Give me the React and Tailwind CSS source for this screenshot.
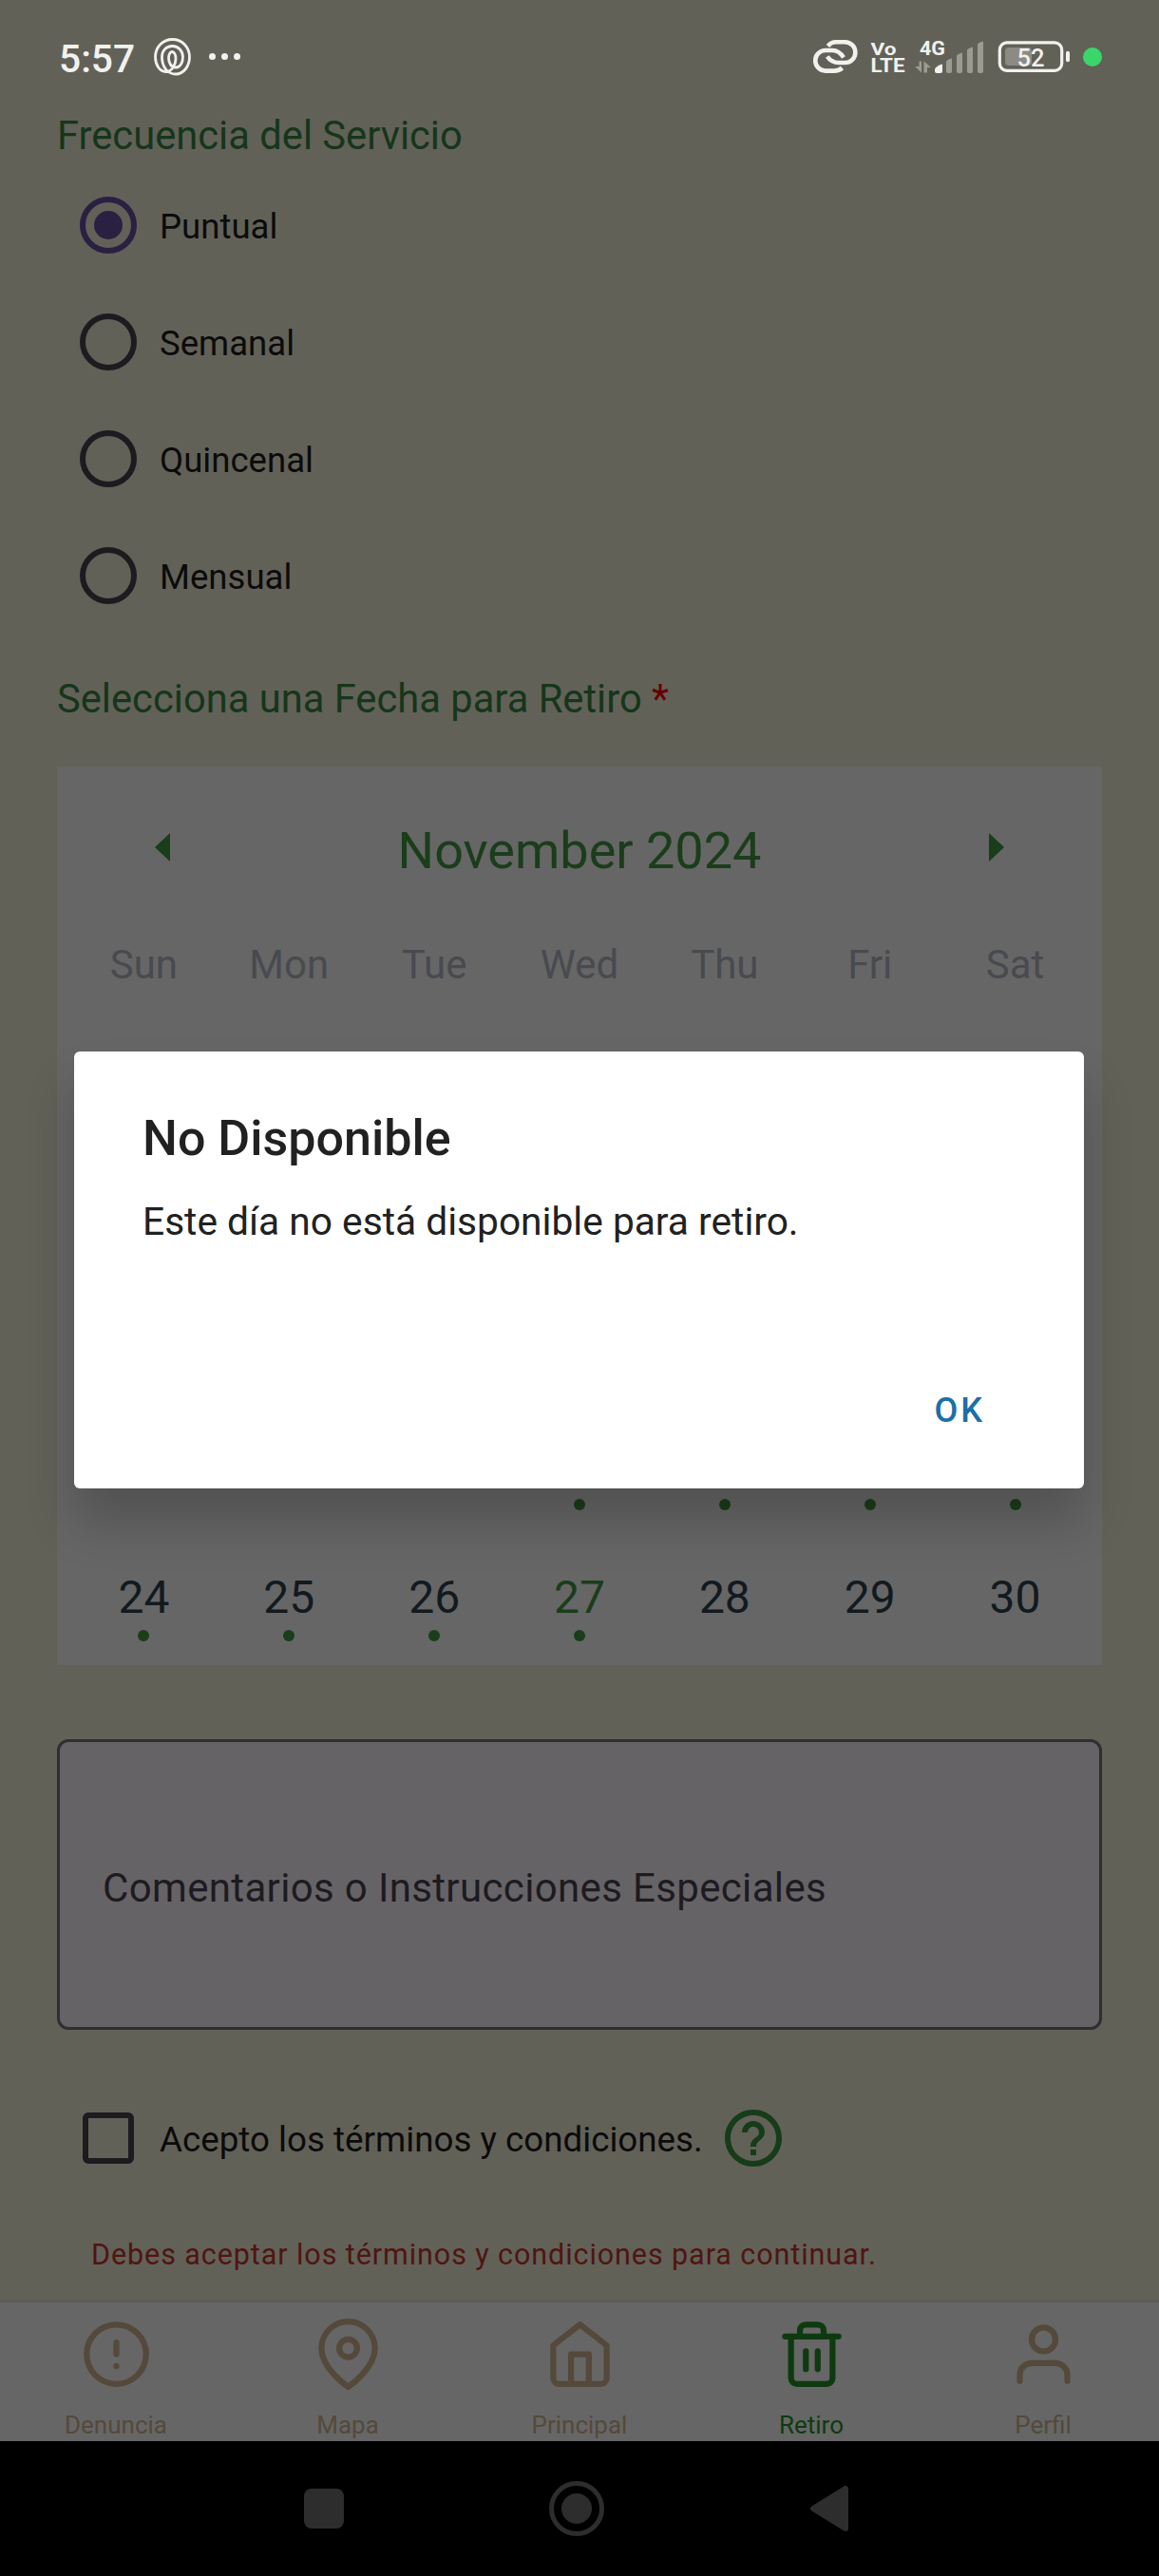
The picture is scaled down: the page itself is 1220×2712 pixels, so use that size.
import React from "react";
import { FiAlertCircle, FiMapPin, FiHome, FiTrash2, FiUser } from "react-icons/fi";
import { MdHelpOutline } from "react-icons/md";

function SpiralIcon() {
  return (
    <svg width="39" height="40" viewBox="0 0 39 40" fill="none" stroke="#f1f1ee" strokeWidth="2.8" strokeLinejoin="round" className="-mt-[3px]">
      <path d="M23 22C23 28 19 35.500 12.500 35.500C6 35.500 1.500 28 1.500 20C1.500 9.500 9.500 1.500 19.500 1.500C30 1.500 37.500 10 37.500 20C37.500 30 31 38 23 38C14 38 8.500 30 8.500 20C8.500 13 13 8.500 19.500 8.500C26 8.500 30.500 14 30.500 20C30.500 26 27.500 31 23 31C18 31 15.500 26 15.500 21C15.500 18 17 14.500 19 14.500C21.500 14.500 23 18 23 22Z" />
    </svg>
  );
}

function StatusBar() {
  return (
    <header className="flex h-[120px] shrink-0 items-center justify-between pr-[60px] pl-[62px] pt-[2px]">
      <div className="flex items-center">
        <span className="w-[100px] pt-[2px] text-[40.7px] leading-[48px] font-medium text-[#f1f1ee]">5:57</span>
        <SpiralIcon />
        <div className="-mt-[4px] ml-[19px] flex gap-[6px]">
          <span className="size-[7px] rounded-full bg-[#f1f1ee]" />
          <span className="size-[7px] rounded-full bg-[#f1f1ee]" />
          <span className="size-[7px] rounded-full bg-[#f1f1ee]" />
        </div>
      </div>
      <svg width="304" height="60" viewBox="0 -12 304 60" fill="none" className="overflow-visible">
        <g stroke="#f1f1ee" strokeWidth="4.6">
          <path d="M32 17.500C29 13 25 10 20.500 10H13A10.800 10.800 0 0 0 13 31.600H22C26 31.600 28.500 30.500 30.500 28.500" />
          <path d="M15.500 5.500C17.500 3 20 1.300 24 1.300H33.500A10.850 10.850 0 0 1 33.500 23H27C21.500 23 17.500 20.500 14.800 16.500" />
        </g>
        <g fill="#f1f1ee" fontFamily="Roboto, sans-serif" fontWeight="700">
          <text x="60.500" y="14.500" fontSize="19" textLength="27" lengthAdjust="spacingAndGlyphs">Vo</text>
          <text x="60.500" y="32.500" fontSize="19.500" textLength="36" lengthAdjust="spacingAndGlyphs">LTE</text>
          <text x="112" y="14.500" fontSize="21" textLength="27" lengthAdjust="spacingAndGlyphs">4G</text>
        </g>
        <g fill="#9b9b92">
          <path d="M111.500 21.500H114V33.500L107 27H111.500Z" />
          <path d="M116.500 21.500L124 28H120V33.500H116.500Z" />
          <path d="M140 22Q140 20 146 18.500V32Q146 34 144 34H142Q140 34 140 32Z" />
          <path d="M151 16Q151 14 157 12.500V32Q157 34 155 34H153Q151 34 151 32Z" />
          <path d="M162 10Q162 8 168 6.500V32Q168 34 166 34H164Q162 34 162 32Z" />
          <path d="M173 4Q173 2 179 .500V32Q179 34 177 34H175Q173 34 173 32Z" />
        </g>
        <path d="M128 30Q129 26.500 136 24.500V32Q136 34 134 34H130Q128 34 128 32Z" fill="#f1f1ee" />
        <rect x="196.300" y="1.900" width="65.400" height="29.400" rx="7.500" stroke="#f1f1ee" strokeWidth="3.200" />
        <rect x="202" y="7" width="28" height="19" rx="4" fill="#8b8b83" />
        <rect x="266" y="10.700" width="4" height="11.500" rx="2" fill="#f1f1ee" />
        <text x="229" y="27.200" fontSize="25.500" textAnchor="middle" fontWeight="500" fontFamily="Roboto, sans-serif" fill="#f1f1ee">52</text>
        <circle cx="294" cy="17" r="10" fill="#3ad66a" />
      </svg>
    </header>
  );
}

function Radio({ label, checked }) {
  return (
    <div className="flex h-[60px] items-center gap-[24px] pl-[24px]">
      <span className={checked ? "flex size-[60px] items-center justify-center rounded-full border-[6px] border-[#292042]" : "size-[60px] rounded-full border-[6px] border-[#1d1b20]"}>
        {checked && <span className="size-[30px] rounded-full bg-[#292042]" />}
      </span>
      <span className="pt-[4px] text-[36.6px] leading-[44px] text-[#0b0b0a]">{label}</span>
    </div>
  );
}

function Day({ n, dot, today }) {
  return (
    <div className="flex h-[138px] flex-col items-center pt-[58px]">
      <span className={today ? "h-[48px] text-[48px] leading-[48px] text-[#1a3d1a]" : "h-[48px] text-[48px] leading-[48px] text-[#121a20]"}>{n}</span>
      {dot && <span className="mt-[10px] size-[12px] rounded-full bg-[#1a3d1a]" />}
    </div>
  );
}

const lastWeek = [
  { n: 24, dot: true }, { n: 25, dot: true }, { n: 26, dot: true }, { n: 27, dot: true, today: true },
  { n: 28 }, { n: 29 }, { n: 30 },
];

function Calendar() {
  return (
    <section className="mt-[51px] flex h-[946px] flex-col bg-[#666666] px-[15px]">
      <div className="flex h-[174px] items-center justify-between px-[88px] text-[#1a3d1a]">
        <svg width="16" height="30" viewBox="0 0 16 30" className="-mt-[4px]"><path d="M16 0V30L0 15Z" fill="currentColor" /></svg>
        <h2 className="pt-[3px] text-[54px] leading-[64px]">November 2024</h2>
        <svg width="16" height="30" viewBox="0 0 16 30" className="-mt-[4px]"><path d="M0 0V30L16 15Z" fill="currentColor" /></svg>
      </div>
      <div className="grid h-[70px] grid-cols-7 items-center text-center text-[42px] leading-[50px] text-[#484a4f]">
        {["Sun", "Mon", "Tue", "Wed", "Thu", "Fri", "Sat"].map((d) => <span key={d}>{d}</span>)}
      </div>
      <div className="mt-auto grid grid-cols-7">
        {[false, false, false, true, true, true, true].map((d, i) => <Day key={i} dot={d} />)}
        {lastWeek.map((d) => <Day key={d.n} {...d} />)}
      </div>
      <div className="h-[15px]" />
    </section>
  );
}

function Tab({ icon: Icon, label, active }) {
  return (
    <div className={active ? "flex flex-col items-center text-[#0e3a10]" : "flex flex-col items-center text-[#54493a]"}>
      <Icon size={75} className="mt-[17px]" />
      <span className="mt-[23px] text-[26px] leading-[28px]">{label}</span>
    </div>
  );
}

export default function App() {
  return (
    <div className="relative flex h-[2712px] w-[1220px] flex-col overflow-hidden bg-[#626158] font-[Roboto,sans-serif]">
      <StatusBar />
      <main className="flex h-[2302px] shrink-0 flex-col px-[60px]">
        <h3 className="h-[42px] pt-[1px] text-[41.7px] leading-[44px] text-[#15361a]">Frecuencia del Servicio</h3>
        <div className="mt-[45px] flex flex-col gap-[63px]">
          <Radio label="Puntual" checked />
          <Radio label="Semanal" />
          <Radio label="Quincenal" />
          <Radio label="Mensual" />
        </div>
        <h3 className="mt-[78px] h-[42px] text-[41.7px] leading-[44px] text-[#15361a]">
          Selecciona una Fecha para Retiro <span className="text-[#660000]">*</span>
        </h3>
        <Calendar />
        <div className="mt-[78px] flex h-[306px] items-center rounded-[12px] border-[3px] border-[#302e33] bg-[#666367] px-[45px] pt-[8px]">
          <span className="text-[42px] leading-[50px] tracking-[0.35px] text-[#1d1b20]">Comentarios o Instrucciones Especiales</span>
        </div>
        <div className="mt-[78px] flex h-[72px] items-center pl-[27px]">
          <span className="size-[54px] rounded-[6px] border-[6px] border-[#1d1b20]" />
          <span className="ml-[27px] w-[589px] pt-[4px] text-[36.75px] leading-[44px] whitespace-nowrap text-[#0b0b0a]">Acepto los términos y condiciones.</span>
          <MdHelpOutline size={72} color="#173c19" />
        </div>
        <p className="mt-[69px] h-[36px] pl-[36px] text-[30.5px] leading-[36px] tracking-[0.92px] whitespace-nowrap text-[#4f1511]">
          Debes aceptar los términos y condiciones para continuar.
        </p>
      </main>
      <nav className="grid h-[148px] shrink-0 grid-cols-5 border-t-2 border-[#5b5b55] bg-[#666666]">
        <Tab icon={FiAlertCircle} label="Denuncia" />
        <Tab icon={FiMapPin} label="Mapa" />
        <Tab icon={FiHome} label="Principal" />
        <Tab icon={FiTrash2} label="Retiro" active />
        <Tab icon={FiUser} label="Perfil" />
      </nav>
      <footer className="flex h-[142px] shrink-0 items-center bg-black pl-[320px]">
        <span className="size-[42px] rounded-[8px] bg-[#2d2d2d]" />
        <span className="ml-[216px] flex size-[58px] items-center justify-center rounded-full border-[5px] border-[#2d2d2d]">
          <span className="size-[32px] rounded-full bg-[#2d2d2d]" />
        </span>
        <svg width="40" height="48" viewBox="0 0 40 48" className="ml-[217px]">
          <path d="M3 24L37 3V45Z" fill="#2d2d2d" stroke="#2d2d2d" strokeWidth="6" strokeLinejoin="round" />
        </svg>
      </footer>

      <div role="dialog" className="absolute top-[1107px] left-[78px] flex h-[460px] w-[1063px] flex-col rounded-[6px] bg-white px-[72px] text-[#212121] shadow-[0_36px_52px_rgba(0,0,0,0.2)]">
        <h1 className="mt-[65px] text-[52px] leading-[54px] font-medium">No Disponible</h1>
        <p className="mt-[38px] text-[40.7px] leading-[44px]">Este día no está disponible para retiro.</p>
        <button className="mt-[154px] mr-[32px] self-end text-[36px] leading-[46px] font-medium tracking-[3px] text-[#1b6fa8]">OK</button>
      </div>
    </div>
  );
}
